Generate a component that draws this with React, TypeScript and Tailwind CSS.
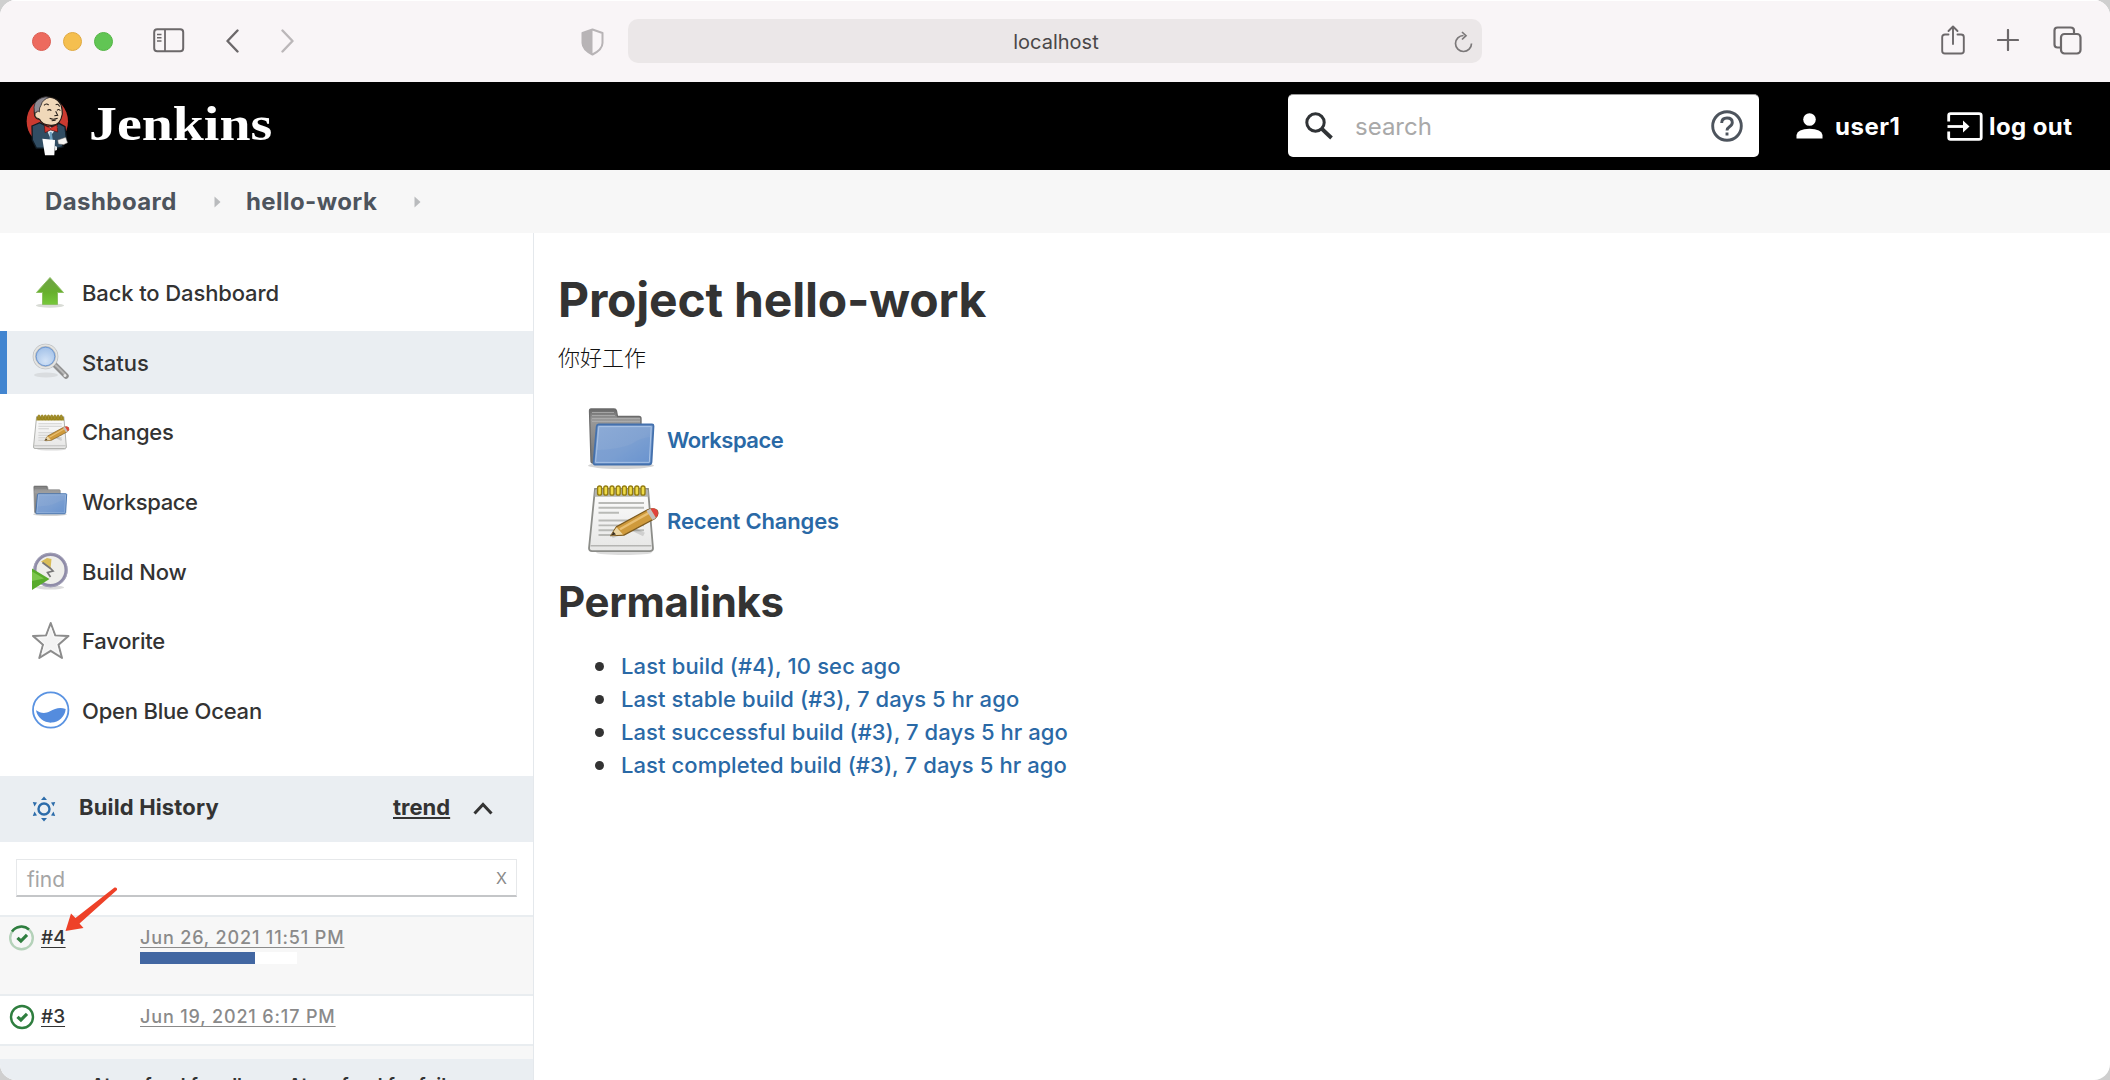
import type { ReactNode } from "react";

const MENU = [
  { label: "Back to Dashboard", icon: <UpArrowIcon />, ls: "tracking-[-0.12px]" },
  { label: "Status", icon: <MagnifierIcon />, ls: "tracking-normal", active: true },
  { label: "Changes", icon: <NotepadIcon small />, ls: "tracking-[-0.28px]" },
  { label: "Workspace", icon: <FolderIcon small />, ls: "tracking-[-0.4px]" },
  { label: "Build Now", icon: <ClockIcon />, ls: "tracking-[-0.17px]" },
  { label: "Favorite", icon: <StarIcon />, ls: "tracking-[-0.2px]" },
  { label: "Open Blue Ocean", icon: <OceanIcon />, ls: "tracking-[-0.2px]" },
];

const PERMALINKS = [
  { label: "Last build (#4), 10 sec ago", ls: "tracking-[0.12px]" },
  { label: "Last stable build (#3), 7 days 5 hr ago", ls: "tracking-[0.09px]" },
  { label: "Last successful build (#3), 7 days 5 hr ago", ls: "tracking-[0.04px]" },
  { label: "Last completed build (#3), 7 days 5 hr ago", ls: "tracking-[0.09px]" },
];

function UpArrowIcon() {
  return (
    <svg width="37" height="38" viewBox="0 0 37 38">
      <defs>
        <linearGradient id="up" x1="0" y1="0" x2="0" y2="1">
          <stop offset="0" stopColor="#6fa04a" />
          <stop offset="0.55" stopColor="#67b02c" />
          <stop offset="1" stopColor="#76c83a" />
        </linearGradient>
      </defs>
      <ellipse cx="18" cy="31.500" rx="14" ry="2.200" fill="#d9dcd6" />
      <path d="M18 3.500 L31.500 18.500 H25.500 V30.500 H10.500 V18.500 H4.500 Z" fill="url(#up)" stroke="#8dc063" strokeWidth="1" />
    </svg>
  );
}

function MagnifierIcon() {
  return (
    <svg className="mb-[2px]" width="37" height="38" viewBox="0 0 37 38">
      <defs>
        <radialGradient id="lens" cx="0.5" cy="0.7" r="0.7">
          <stop offset="0" stopColor="#d3e3f7" />
          <stop offset="1" stopColor="#9dbde6" />
        </radialGradient>
      </defs>
      <ellipse cx="14" cy="32" rx="12" ry="2.500" fill="#d9dcdf" />
      <path d="M22 21 L34 33" stroke="#8f8f8f" strokeWidth="5.500" strokeLinecap="round" />
      <path d="M24 22.500 L33 31.500" stroke="#b9b9b9" strokeWidth="2" strokeLinecap="round" />
      <circle cx="33" cy="32.500" r="1.500" fill="#e9e9e9" />
      <circle cx="13.500" cy="13.500" r="11" fill="url(#lens)" stroke="#b4b6b8" strokeWidth="3.600" />
      <circle cx="13.500" cy="13.500" r="11.300" fill="none" stroke="#e4e4e2" strokeWidth="1.800" />
      <circle cx="13.500" cy="13.500" r="9.300" fill="none" stroke="#6f9bd8" strokeWidth="1" />
    </svg>
  );
}

function NotepadIcon({ small = false }: { small?: boolean }) {
  return (
    <svg className={small ? "ml-px" : ""} width={small ? 38 : 74} height={small ? 37 : 72} viewBox="0 0 74 74" preserveAspectRatio="none">
      <defs>
        <linearGradient id={small ? "np1" : "np2"} x1="0" y1="0" x2="0" y2="1">
          <stop offset="0" stopColor="#fdfdfd" />
          <stop offset="1" stopColor="#e6e6e5" />
        </linearGradient>
      </defs>
      <ellipse cx="36" cy="70.500" rx="28" ry="2.500" fill="#dcdcdc" />
      <path d="M7 5 H60 L65 66 Q65 69 62 69 H4 Q1 69 1 66 Z" fill={small ? "url(#np1)" : "url(#np2)"} stroke={small ? "#aaaba8" : "#8c8d89"} strokeWidth="1.800" />
      <path d="M7 6 H60 L60.500 13 H6.500 Z" fill={small ? "#a08e2c" : "#b3b4b1"} />
      <path d="M2.500 63.500 H63.500" stroke="#b5b5b3" strokeWidth="1.500" />
      <g fill={small ? "#a89436" : "#f0dc48"} stroke="#937c10" strokeWidth="1.400">
        {[11.5, 17.7, 23.9, 30.1, 36.3, 42.5, 48.7, 54.9].map((x) => (
          <rect key={x} x={x - 1.9} y="2" width="4" height="9.500" rx="2" />
        ))}
      </g>
      <path d="M10.500 19.500H56M10.500 24.500H56M10.500 29.500H31M10.500 37.500H56M10.500 42.500H56M10.500 47.500H56M10.500 52.500H34" stroke={small ? "#cfd0ce" : "#b9bab7"} strokeWidth="2" />
      <path d="M24 54 L44 46 L56 52" stroke="#000" strokeOpacity="0.120" strokeWidth="4" fill="none" />
      <path d="M23 53 L28.500 44 L59.500 26.500 Q65 24.500 69 27 Q71.500 31.500 67 35.500 L36 52.500 Z" fill="#cf9a3c" stroke="#7d5a1e" strokeWidth="1.300" />
      <path d="M32 46.500 L62 29" stroke="#e9bf72" strokeWidth="2.400" />
      <path d="M23 53 L28.500 44.500 L35 52 Z" fill="#ecd6a4" />
      <path d="M23 53 L25.500 49 L28 52 Z" fill="#3c3020" />
      <path d="M58.500 27.500 L62.500 25.300 L68 35 L64.500 37 Z" fill="#c4bfbd" />
      <path d="M62.500 25.500 Q67 23.500 69.500 27.500 Q71 32 68 34.500 Z" fill="#e0423c" />
    </svg>
  );
}

function FolderIcon({ small = false }: { small?: boolean }) {
  return (
    <svg className={small ? "ml-px mb-[2px]" : ""} width={small ? 36 : 70} height={small ? 32 : 64} viewBox="0 0 70 64" preserveAspectRatio="none">
      <defs>
        <linearGradient id={small ? "fb1" : "fb2"} x1="0" y1="0" x2="0" y2="1">
          <stop offset="0" stopColor="#666" />
          <stop offset="0.200" stopColor="#9a9a9a" />
          <stop offset="1" stopColor="#747474" />
        </linearGradient>
        <linearGradient id={small ? "ff1" : "ff2"} x1="0" y1="0" x2="1" y2="1">
          <stop offset="0" stopColor="#8dabd6" />
          <stop offset="0.550" stopColor="#82a3d2" />
          <stop offset="1" stopColor="#6490cd" />
        </linearGradient>
      </defs>
      <ellipse cx="33" cy="58.500" rx="33" ry="3.500" fill="#d4d4d4" />
      <path d="M3 2 H26 Q28 2 28.500 4 L29.500 9.500 H51 Q53 9.500 53 11.500 V56 H5 Q3 56 3 54 L1.500 4 Q1.500 2 3 2 Z" fill={small ? "url(#fb1)" : "url(#fb2)"} stroke={small ? "#8a8a8a" : "#6b6b6b"} strokeWidth="1.300" />
      <path d="M4 5.500H26M4 8.500H27M4 11.500H52M4 14.500H52" stroke="#b0b0b0" strokeWidth="0.800" />
      <path d="M10.500 17.500 H64 Q65.500 17.500 65.500 19 L63.500 55 Q63 57.500 61 57.500 H7 Q5.500 57.500 5.600 55.500 L8.700 19.500 Q9 17.500 10.500 17.500 Z" fill={small ? "url(#ff1)" : "url(#ff2)"} stroke="#4471ad" strokeWidth="1.800" />
      <path d="M10.800 19.600 H63.200 L61.300 55.300 H7.700 Z" fill="none" stroke="#a9c3e6" strokeWidth="1" />
      <path d="M9 43 Q35 42 45 36 Q53 31 62 30 L60.500 55 H8 Z" fill="#6f98d0" fillOpacity="0.350" />
    </svg>
  );
}

function ClockIcon() {
  return (
    <svg className="mb-[2px]" width="37" height="38" viewBox="0 0 37 38">
      <ellipse cx="18" cy="35.500" rx="14" ry="2" fill="#dcdcdc" />
      <circle cx="18.500" cy="18" r="15.600" fill="#eeeeea" stroke="#8f8ca8" strokeWidth="3.200" />
      <circle cx="18.500" cy="18" r="16.800" fill="none" stroke="#aaa8bd" strokeWidth="0.800" />
      <path d="M18.500 17 L9 9.500 L15 6 L19.500 7 Z" fill="#d9bd58" />
      <path d="M10.500 10.500 L18.500 16.500 L21 19 L15.500 20.500 L18.500 25" fill="none" stroke="#777" strokeWidth="1.700" />
      <path d="M0 16.500 L17.500 27 L0 38 Z" fill="#58ab2b" />
      <path d="M0 19.500 L12 26.500 L0 29 Z" fill="#7cc64c" />
    </svg>
  );
}

function StarIcon() {
  return (
    <svg className="mb-[2px]" width="38" height="39" viewBox="0 0 38 39">
      <path d="M18.700 2 L23.300 14.500 L36.500 15 L26.500 23.700 L30 37 L18.700 29.800 L7.300 37 L11 23.700 L1 15 L14 14.500 Z" fill="#ececec" stroke="#8c8c8c" strokeWidth="2" strokeLinejoin="round" />
      <path d="M18.700 6.500 L22 16 L32 16.500 L24.500 23.200 L27.200 33 L18.700 27.600 L10 33 L12.800 23.200 L5.500 16.500 L15.400 16 Z" fill="#f3f3f3" stroke="#fbfbfb" strokeWidth="1" />
    </svg>
  );
}

function OceanIcon() {
  return (
    <svg className="mb-[3px]" width="38" height="38" viewBox="0 0 38 38">
      <circle cx="18.700" cy="19" r="17.700" fill="#fff" stroke="#5a93e2" strokeWidth="1.800" />
      <path d="M4 19.300 C8 22 13 23 18 20.300 C23 17.300 28 15.800 33.700 18 A15 15 0 0 1 4 19.300 Z" fill="#548cde" />
    </svg>
  );
}

function Butler() {
  return (
    <svg width="44" height="61" viewBox="76 50 132 183">
      <ellipse cx="143" cy="126" rx="62" ry="69" fill="#ca3a30" />
      <path d="M97 140 L120 130 L150 145 L178 132 L196 142 L200 178 L186 188 L190 202 L168 208 L110 206 L98 182 Z" fill="#314d63" stroke="#101a22" strokeWidth="4" />
      <path d="M138 143 L150 172 L174 143 Z" fill="#dfe9ef" />
      <path d="M150 158 L156 158 L160 186 L150 180 Z" fill="#6ca0bf" />
      <path d="M110 74 Q118 50 148 53 Q184 58 187 90 L188 104 Q182 140 154 138 Q126 136 120 120 Q104 118 104 100 Q104 84 110 74 Z" fill="#f0d8b9" stroke="#201a16" strokeWidth="3.500" />
      <path d="M104 98 Q98 66 124 56 Q138 50 150 54 Q128 60 124 78 Q118 84 119 98 Q112 90 110 104 Z" fill="#8d8a92" stroke="#2c2a2e" strokeWidth="2.500" />
      <path d="M112 98 Q104 98 106 108 Q108 118 118 118" fill="#f0d8b9" stroke="#201a16" strokeWidth="2.500" />
      <path d="M133 78 Q140 70 147 77 M168 76 Q176 72 180 82 M143 93 Q150 88 155 94 M172 93 Q178 88 182 94 M168 96 L174 108 L164 109 M150 117 Q160 122 174 117 M156 124 L168 123" fill="none" stroke="#28201a" strokeWidth="3.200" />
      <path d="M134 138 L152 146 L172 136 L174 158 L153 152 L136 160 Z" fill="#d8372f" stroke="#4a1210" strokeWidth="2" />
      <path d="M128 178 L166 182 L164 228 L136 228 Z" fill="#fdfdfd" />
      <path d="M174 182 L198 174 L204 190 L192 196 L176 194 Z" fill="#f6f4f2" stroke="#555" strokeWidth="1.500" />
      <path d="M166 200 L172 202 L172 212 L165 214 Z" fill="#e6e6e6" />
    </svg>
  );
}

function BuildStatus({ running = false }: { running?: boolean }) {
  return (
    <svg width="26" height="26" viewBox="0 0 26 26">
      {running ? (
        <>
          <circle cx="12.500" cy="13" r="11.300" fill="none" stroke="#b4d2b9" strokeWidth="2.400" />
          <path d="M3 6.500 A11.500 11.500 0 0 1 20 4.500" fill="none" stroke="#2f7e3f" strokeWidth="2.500" />
        </>
      ) : (
        <circle cx="13" cy="13" r="11" fill="#fff" stroke="#2f7e3f" strokeWidth="2.400" />
      )}
      <path d="M8.500 12.800 L11.900 16 L18 9.800" fill="none" stroke="#2f7e3f" strokeWidth="3.200" />
    </svg>
  );
}

function Crumb() {
  return (
    <svg width="7" height="12" viewBox="0 0 7 12">
      <path d="M0.500 0.500 L6.500 6 L0.500 11.500 Z" fill="#b9bbbd" />
    </svg>
  );
}

function Toolbar() {
  return (
    <header className="flex h-[82px] shrink-0 items-center border-t border-white bg-[#f9f5f7]">
      <div className="ml-[32px] flex items-center gap-[12px]">
        <span className="size-[19px] rounded-full border border-[#dc5d52] bg-[#ed6a5e]" />
        <span className="size-[19px] rounded-full border border-[#e0a941] bg-[#f5bf4f]" />
        <span className="size-[19px] rounded-full border border-[#54b545] bg-[#61c554]" />
      </div>
      <svg className="mb-[2px] ml-[40px]" width="32" height="25" viewBox="0 0 32 25" fill="none" stroke="#6c686a">
        <rect x="1.200" y="1.200" width="29" height="22" rx="3" strokeWidth="2" />
        <path d="M12 1 V23.500" strokeWidth="1.800" />
        <path d="M4 6.500H8.500M4 9.800H8.500M4 13H8.500" strokeWidth="1.500" />
      </svg>
      <svg className="mb-[2px] ml-[41px]" width="13" height="24" viewBox="0 0 13 24" fill="none" stroke="#6c686a" strokeWidth="2.400" strokeLinecap="round" strokeLinejoin="round">
        <path d="M11.500 1.500 L1.500 12 L11.500 22.500" />
      </svg>
      <svg className="mb-[2px] ml-[42px]" width="13" height="24" viewBox="0 0 13 24" fill="none" stroke="#bbb7b9" strokeWidth="2.400" strokeLinecap="round" strokeLinejoin="round">
        <path d="M1.500 1.500 L11.500 12 L1.500 22.500" />
      </svg>
      <svg className="ml-[287px]" width="23" height="28" viewBox="0 0 23 28">
        <path d="M11.500 1.500 L21.500 5 V15 Q21.500 21.500 11.500 26.500 Q1.500 21.500 1.500 15 V5 Z" fill="none" stroke="#b8b4b6" strokeWidth="2" strokeLinejoin="round" />
        <path d="M11.500 1.500 L1.500 5 V15 Q1.500 21.500 11.500 26.500 Z" fill="#b8b4b6" />
      </svg>
      <div className="mb-[1px] ml-[24px] flex h-[44px] w-[854px] items-center rounded-[10px] bg-[#ebe7e8]">
        <span className="w-[30px]" />
        <span className="flex-1 pt-[2px] text-center text-[20px] text-[#4a4748]">localhost</span>
        <svg className="mt-[1px] mr-[9px]" width="19" height="22" viewBox="0 0 19 22" fill="none" stroke="#7b7879" strokeWidth="1.700">
          <path d="M9.500 4.500 A8 8 0 1 0 17.500 12.500" />
          <path d="M8 1 L12 4.700 L8 8.500" />
        </svg>
      </div>
      <svg className="mb-[4px] ml-[459px]" width="24" height="30" viewBox="0 0 24 30" fill="none" stroke="#6c686a" strokeWidth="1.900" strokeLinecap="round" strokeLinejoin="round">
        <path d="M7.500 9.500 H4 Q1.200 9.500 1.200 12 V26 Q1.200 28.500 4 28.500 H20 Q22.800 28.500 22.800 26 V12 Q22.800 9.500 20 9.500 H16.500" />
        <path d="M12 19 V1.800 M7.500 6 L12 1.500 L16.500 6" />
      </svg>
      <svg className="mb-[3px] ml-[32px]" width="22" height="22" viewBox="0 0 22 22" stroke="#6c686a" strokeWidth="2.200" strokeLinecap="round">
        <path d="M11 1 V21 M1 11 H21" />
      </svg>
      <svg className="mb-[2px] ml-[34px]" width="29" height="29" viewBox="0 0 29 29" fill="none" stroke="#6c686a" strokeWidth="2.200">
        <rect x="8" y="8" width="19.500" height="19.500" rx="3.500" />
        <path d="M8 21.500 H4.500 Q1.500 21.500 1.500 18.500 V4.500 Q1.500 1.500 4.500 1.500 H17.500 Q21 1.500 21 4.500 V7.500" />
      </svg>
    </header>
  );
}

function TopBar() {
  return (
    <div className="flex h-[88px] shrink-0 items-center bg-black text-white">
      <div className="ml-[25px]"><Butler /></div>
      <div className="ml-[20px] w-[190px] origin-left scale-x-[1.140] pb-[5px] font-['Liberation_Serif',serif] text-[49px] leading-[60px] font-bold">Jenkins</div>
      <div className="mb-[1px] ml-auto flex h-[63px] w-[471px] items-center rounded-[5px] border-t border-[#999] bg-white">
        <svg className="ml-[17px]" width="29" height="28" viewBox="0 0 29 28" fill="none" stroke="#303336">
          <circle cx="10.500" cy="10.500" r="8.700" strokeWidth="3" />
          <path d="M16.500 16.500 L26.500 26" strokeWidth="3.800" />
        </svg>
        <span className="ml-[21px] flex-1 pt-[2px] text-[24px] text-[#a9a9a9]">search</span>
        <svg className="mr-[16px]" width="32" height="32" viewBox="0 0 32 32" fill="none" stroke="#4d545d" strokeWidth="2.900">
          <circle cx="16" cy="16" r="14.300" />
          <path d="M10.700 13 Q10.700 8 16 8 Q21.300 8 21.300 12.500 Q21.300 15 18.500 16.800 Q16 18.500 16 20.500" />
          <path d="M16 22.500 V25.500" />
        </svg>
      </div>
      <svg className="ml-[37px]" width="27" height="26" viewBox="0 0 27 26" fill="#fff">
        <circle cx="13.500" cy="6.500" r="6.300" />
        <path d="M0.500 25.500 V22 Q1.500 16 13.500 15.800 Q25.500 16 26.500 22 V25.500 Z" />
      </svg>
      <span className="ml-[12px] w-[112px] pt-[2px] text-[24px] font-bold tracking-[0.5px]">user1</span>
      <svg width="36" height="29" viewBox="0 0 36 29" fill="none" stroke="#fff" strokeWidth="2.800">
        <path d="M1.700 9.500 V3.500 Q1.700 1.600 3.600 1.600 H32 Q34.200 1.600 34.200 3.500 V25.500 Q34.200 27.400 32 27.400 H3.600 Q1.700 27.400 1.700 25.500 V19.500" />
        <path d="M0.500 14.500 H17" />
        <path d="M16 8.500 L22.500 14.500 L16 20.500 Z" fill="#fff" stroke="none" />
      </svg>
      <span className="ml-[6px] w-[121px] pt-[2px] text-[24px] font-bold tracking-[0.4px]">log out</span>
    </div>
  );
}

function BuildRow({ n, date, running = false, h }: { n: string; date: string; running?: boolean; h: string }) {
  return (
    <div className={`flex shrink-0 border-t-2 border-[#e9edf0] pt-[8px] ${h} ${running ? "bg-[#f7f7f7]" : "bg-white"}`}>
      <div className="ml-[9px] w-[32px]"><BuildStatus running={running} /></div>
      <div className="w-[99px] text-[19px] leading-[26px] font-medium text-[#333] underline underline-offset-[3px]">{n}</div>
      <div>
        <div className="text-[18px] leading-[26px] font-medium tracking-[0.85px] text-[#8a8a8a] underline underline-offset-[3px]">{date}</div>
        {running && (
          <div className="mt-[1px] h-[12px] w-[157px] bg-white">
            <div className="h-full w-[115px] bg-[#4267a2]" />
          </div>
        )}
      </div>
    </div>
  );
}

function Sidebar() {
  return (
    <aside className="relative flex w-[534px] shrink-0 flex-col border-r border-[#e4e8ec]">
      <nav className="flex h-[543px] shrink-0 flex-col gap-[6.7px] pt-[28.5px]">
        {MENU.map((m) => (
          <div key={m.label} className={`flex h-[63px] shrink-0 items-center ${m.active ? "border-l-[7px] border-[#4285d0] bg-[#eaeef2] pl-[25px]" : "pl-[32px]"}`}>
            <span className="flex w-[50px] items-center">{m.icon}</span>
            <span className={`pt-[1px] text-[22px] font-medium whitespace-nowrap ${m.ls}`}>{m.label}</span>
          </div>
        ))}
      </nav>
      <div className="flex h-[66px] shrink-0 items-center bg-[#eaeef2] pb-[3px] text-[22px] font-bold">
        <svg className="mt-[3px] ml-[32px]" width="24" height="26" viewBox="0 0 24 26">
          <circle cx="12" cy="13" r="5.500" fill="none" stroke="#2c6caa" strokeWidth="2.400" />
          <path d="M12 0.500 L15 4 H9 Z M12 25.500 L15 22 H9 Z M0.800 6 L5 6.500 L2.500 10.500 Z M23.200 6 L19 6.500 L21.500 10.500 Z M0.800 20 L5 19.500 L2.500 15.500 Z M23.200 20 L19 19.500 L21.500 15.500 Z" fill="#2c6caa" />
        </svg>
        <span className="ml-[23px] w-[314px] tracking-[0.15px]">Build History</span>
        <span className="w-[80px] underline decoration-[1.5px] underline-offset-[2px]">trend</span>
        <svg className="mt-[2px]" width="20" height="13" viewBox="0 0 20 13" fill="none" stroke="#333" strokeWidth="3">
          <path d="M1.500 11.500 L10 2.500 L18.500 11.500" />
        </svg>
      </div>
      <div className="h-[73px] shrink-0 px-[16px] pt-[17px]">
        <div className="flex h-[38px] items-center justify-between border border-b-2 border-[#e6e8ea] border-b-[#c4c6c8] pr-[9px] pl-[10px] text-[#a5a5a5]">
          <span className="pt-[4px] text-[21px]">find</span>
          <span className="text-[16px] text-[#8a8a8a]">X</span>
        </div>
      </div>
      <BuildRow n="#4" date="Jun 26, 2021 11:51 PM" running h="h-[79px]" />
      <BuildRow n="#3" date="Jun 19, 2021 6:17 PM" h="h-[50px]" />
      <div className="h-[15px] shrink-0 border-t-2 border-[#e9edf0] bg-[#f7f7f7]" />
      <div className="flex h-[40px] shrink-0 bg-[#eaeef2] pt-[13px] pl-[91px] text-[19px] font-semibold">
        <span className="w-[197px]">Atom feed for all</span>
        <span>Atom feed for failures</span>
      </div>
      <svg className="absolute top-[653px] left-[64px]" width="55" height="46" viewBox="0 0 55 46" fill="#ee4128">
        <path d="M1.500 45 L7 27.500 L11.500 32 L50.500 1.500 Q53.500 1 53 4 L15.500 37.500 L19.500 42 Z" />
      </svg>
    </aside>
  );
}

function Main() {
  return (
    <main className="flex-1 pl-[24px]">
      <h1 className="mt-[38px] text-[48px] leading-[58px] font-bold tracking-[-0.2px]">Project hello-work</h1>
      <p className="mt-[11px] font-['Noto_Sans_CJK_SC',sans-serif] text-[22px] leading-[32px] font-light text-[#111]">你好工作</p>
      <div className="mt-[35px] ml-[30px] flex h-[77px] items-start text-[22px] font-semibold text-[#2a69a6]">
        <FolderIcon />
        <span className="mt-[17px] ml-[9px] tracking-[-0.5px]">Workspace</span>
      </div>
      <div className="ml-[30px] flex h-[74px] items-start text-[22px] font-semibold text-[#2a69a6]">
        <NotepadIcon />
        <span className="mt-[21px] ml-[5px] tracking-[-0.17px]">Recent Changes</span>
      </div>
      <h2 className="mt-[18px] text-[42px] leading-[52px] font-bold tracking-[-0.3px]">Permalinks</h2>
      <ul className="mt-[22px] text-[22px] leading-[33px] font-medium text-[#2a69a6]">
        {PERMALINKS.map((p) => (
          <li key={p.label} className="flex items-center">
            <span className="ml-[37px] size-[9px] rounded-full bg-[#333]" />
            <span className={`ml-[17px] ${p.ls}`}>{p.label}</span>
          </li>
        ))}
      </ul>
    </main>
  );
}

export default function App(): ReactNode {
  return (
    <div className="h-[1080px] w-[2110px] overflow-hidden bg-[#cfcfcf] font-[Inter,'Noto_Sans_CJK_SC',sans-serif] text-[#333]">
      <div className="flex h-[1080px] flex-col overflow-hidden rounded-[16px] bg-white">
        <Toolbar />
        <TopBar />
        <div className="flex h-[63px] shrink-0 items-center bg-[#f7f7f7] text-[24px] font-bold tracking-[0.42px] text-[#4d545d]">
          <span className="ml-[45px] w-[169px] pt-[1px]">Dashboard</span>
          <Crumb />
          <span className="ml-[25px] w-[168px] pt-[1px]">hello-work</span>
          <Crumb />
        </div>
        <div className="flex min-h-0 flex-1">
          <Sidebar />
          <Main />
        </div>
      </div>
    </div>
  );
}
